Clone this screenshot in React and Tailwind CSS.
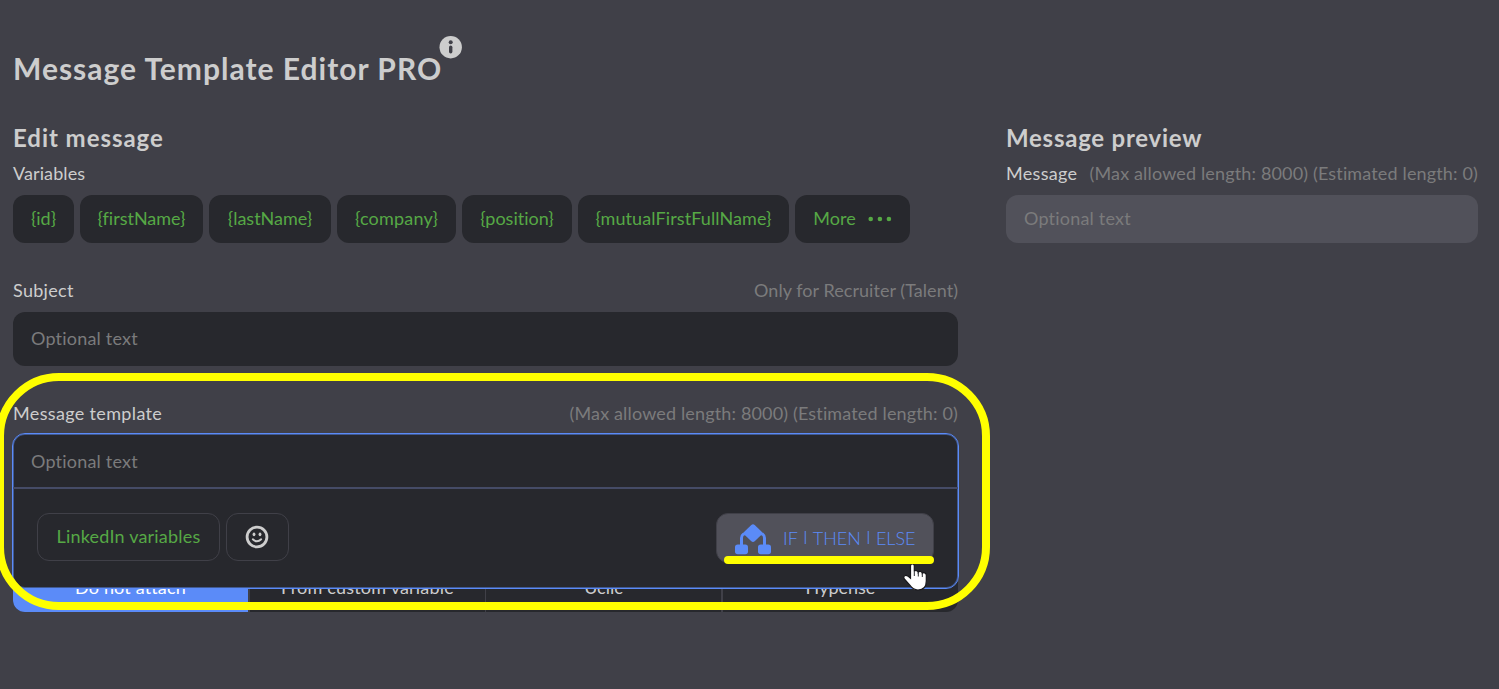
const chips = [
  ["{id}", "w-[61px]"],
  ["{firstName}", "w-[123px]"],
  ["{lastName}", "w-[122px]"],
  ["{company}", "w-[119px] tracking-[0.2px]"],
  ["{position}", "w-[110px]"],
  ["{mutualFirstFullName}", "w-[211px] tracking-[0.1px]"],
];

const tabs = [
  ["Do not attach", "w-[235px] bg-[#5b8bf8] text-white tracking-[0.15px]"],
  ["From custom variable", "w-[237px] border-l-2 border-[#404048] tracking-[0.2px]"],
  ["Uclic", "w-[236px] border-l border-[#404048]"],
  ["Hypense", "w-[237px] border-l-2 border-[#404048]"],
];

function InfoIcon() {
  return (
    <svg className="mt-9 -ml-[3px] size-[23px]" viewBox="0 0 23 23">
      <circle cx="11.7" cy="11.2" r="11.2" fill="#cdcdcd" />
      <circle cx="11.7" cy="6.2" r="2" fill="#404048" />
      <rect x="10" y="9.6" width="3.4" height="7.8" rx="1.7" fill="#404048" />
    </svg>
  );
}

function SmileIcon() {
  return (
    <svg className="-ml-[2px] size-[24px]" viewBox="0 0 24 24" fill="none">
      <circle cx="12" cy="12" r="9.9" stroke="#cdcdcd" strokeWidth="2.8" />
      <ellipse cx="9" cy="9.3" rx="1.4" ry="1.9" fill="#cdcdcd" />
      <ellipse cx="15" cy="9.3" rx="1.4" ry="1.9" fill="#cdcdcd" />
      <path d="M7.8 14.3Q12 18.2 16.2 14.3" stroke="#cdcdcd" strokeWidth="1.9" strokeLinecap="round" />
    </svg>
  );
}

function BranchIcon() {
  return (
    <svg className="mt-[7px] size-9" viewBox="0 0 36 36" fill="#5b8bf8">
      <rect x="0" y="20.5" width="13" height="9.8" rx="2.8" />
      <rect x="23" y="20.5" width="13" height="9.8" rx="2.8" />
      <path d="M6.500 22V14Q6.500 9 13 9.500M29.500 22V14Q29.500 9 23 9.500" fill="none" stroke="#5b8bf8" strokeWidth="3" />
      <path d="M16.300 1Q18 -0.600 19.700 1L26.700 7.800Q28 9.200 26.700 10.600L19.700 17.300Q18 18.800 16.300 17.300L9.300 10.600Q8 9.200 9.300 7.800Z" />
    </svg>
  );
}

function HandCursor() {
  return (
    <svg className="absolute top-[562px] left-[902px] z-30 h-[29px] w-[27px]" viewBox="0 0 27 29">
      <path
        d="M8.500 4C8.500 1.300 12.300 1.300 12.300 4V9.500C13 8 16 8.200 16.200 10.300C17.200 8.800 20 9.300 20.300 11.300C21.500 10 24.300 10.800 24.300 13.200V19C24.300 25 21 28 16 28C11.500 28 9.800 26 7.800 23.200L2.300 17C.5 14.500 3.500 12.300 5.600 13.900L8.500 16.300Z"
        fill="#fff"
        stroke="#17171b"
        strokeWidth="1.2"
      />
      <path d="M12.300 9.500V14M16.300 10.500V14.500M20.300 11.500V15" stroke="#27282d" strokeWidth="1" />
    </svg>
  );
}

export default function App() {
  return (
    <div className="relative h-[689px] w-[1499px] overflow-hidden bg-[#404048] pl-[13px] font-['Lato',sans-serif] text-[18px] leading-6 text-[#cdcdcd] [font-variant-ligatures:none]">
      <header className="flex h-[113px] items-start">
        <h1 className="mt-[48px] w-[429px] text-[30px] leading-10 font-bold tracking-[1px] whitespace-nowrap">Message Template Editor PRO</h1>
        <InfoIcon />
      </header>
      <div className="flex gap-12">
        <main className="w-[945px]">
          <h2 className="mt-[9px] h-8 text-[24px] leading-8 font-bold tracking-[0.95px]">Edit message</h2>
          <p className="mt-[7px] tracking-[0.1px]">Variables</p>
          <div className="mt-[10px] flex gap-[6px] text-[#56a845]">
            {chips.map(([label, style]) => (
              <button key={label} className={`flex h-12 shrink-0 items-center justify-center rounded-xl bg-[#27282d] pb-[2px] ${style}`}>{label}</button>
            ))}
            <button className="flex h-12 w-[115px] shrink-0 items-center gap-3 rounded-xl bg-[#27282d] pl-[18px]">
              <span className="w-[43px] pb-[2px]">More</span>
              <svg className="h-6 w-6" viewBox="0 0 24 24" fill="currentColor">
                <circle cx="2.7" cy="12" r="2.3" />
                <circle cx="11.9" cy="12" r="2.3" />
                <circle cx="20.9" cy="12" r="2.3" />
              </svg>
            </button>
          </div>
          <div className="mt-[35px] flex justify-between">
            <span className="tracking-[0.3px]">Subject</span>
            <span className="tracking-[0.05px] text-[#7b7b7c]">Only for Recruiter (Talent)</span>
          </div>
          <div className="mt-[10px] flex h-[54px] items-center rounded-xl bg-[#27282d] pb-[2px] pl-[18px] tracking-[0.2px] text-[#7b7b7c]">Optional text</div>
          <div className="mt-[35px] flex justify-between">
            <span className="tracking-[0.35px]">Message template</span>
            <span className="tracking-[0.15px] text-[#7b7b7c]">(Max allowed length: 8000) (Estimated length: 0)</span>
          </div>
          <div className="relative z-10 mt-[8px] -ml-[1px] h-[156px] w-[947px] rounded-[13px] border border-[#5b8bf8] bg-[#27282d] ring-1 ring-[#5b8bf8]/50 ring-inset">
            <div className="flex h-[55px] items-center border-b-2 border-[#454b66] pt-px pl-[18px] tracking-[0.2px] text-[#7b7b7c]">Optional text</div>
            <div className="flex pt-6 pr-6 pl-6">
              <button className="flex h-12 w-[183px] items-center justify-center rounded-xl border border-[#404048] pb-[2px] tracking-[0.2px] text-[#56a845]">LinkedIn variables</button>
              <button className="ml-[6px] flex h-12 w-[63px] items-center justify-center rounded-xl border border-[#404048]"><SmileIcon /></button>
              <button className="ml-auto flex h-[50px] w-[218px] items-center rounded-xl border border-[#404048] bg-[#51515a] pl-[18px] text-[#5b8bf8]">
                <BranchIcon />
                <span className="ml-3 flex items-center font-light">
                  <span>IF</span>
                  <span className="w-[15px] pb-[2px] text-center text-[13px] font-normal">|</span>
                  <span>THEN</span>
                  <span className="w-[15px] pb-[2px] text-center text-[13px] font-normal">|</span>
                  <span>ELSE</span>
                </span>
              </button>
            </div>
          </div>
          <div className="-mt-[25px] flex h-12 overflow-hidden rounded-xl bg-[#27282d]">
            {tabs.map(([label, style]) => (
              <div key={label} className={`flex items-center justify-center pb-[2px] ${style}`}>{label}</div>
            ))}
          </div>
        </main>
        <aside className="w-[472px]">
          <h2 className="mt-[9px] h-8 text-[24px] leading-8 font-bold tracking-[0.75px]">Message preview</h2>
          <p className="mt-[7px] flex justify-between whitespace-nowrap">
            <span className="tracking-[0.3px]">Message</span>
            <span className="tracking-[0.15px] text-[#7b7b7c]">(Max allowed length: 8000) (Estimated length: 0)</span>
          </p>
          <div className="mt-[10px] flex h-12 items-center rounded-xl bg-[#51515a] pb-[2px] pl-[18px] tracking-[0.2px] text-[#7b7b7c]">Optional text</div>
        </aside>
      </div>
      <div className="absolute top-[373px] -left-1 z-20 h-[237px] w-[994px] rounded-[63px] border-8 border-[#ffff00]" />
      <HandCursor />
      <div className="absolute top-[556px] left-[724px] z-40 h-2 w-[210px] rounded-full bg-[#ffff00]" />
    </div>
  );
}
